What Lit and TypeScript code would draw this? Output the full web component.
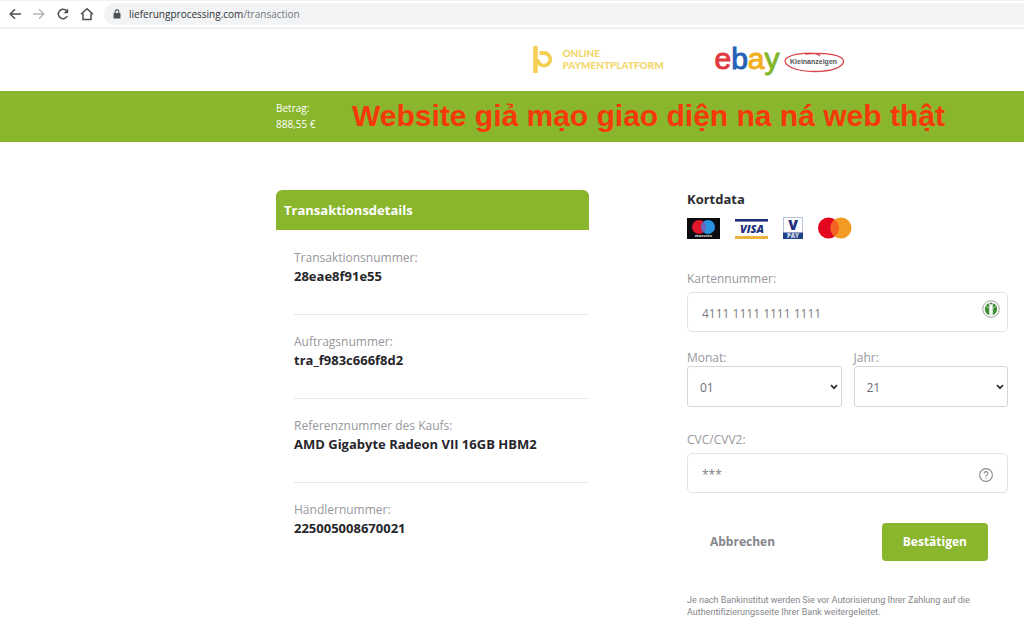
import { LitElement, html, css } from "lit";
import { customElement } from "lit/decorators.js";

const DETAILS = [
  { label: "Transaktionsnummer:", value: "28eae8f91e55" },
  { label: "Auftragsnummer:", value: "tra_f983c666f8d2" },
  { label: "Referenznummer des Kaufs:", value: "AMD Gigabyte Radeon VII 16GB HBM2" },
  { label: "Händlernummer:", value: "225005008670021" },
];

const chevron = html`<svg class="chevron" viewBox="0 0 8 6" width="8" height="6" aria-hidden="true">
  <path d="M1 1.2 4 4.2 7 1.2" fill="none" stroke="#333" stroke-width="1.7" />
</svg>`;

const months = Array.from({ length: 12 }, (_, i) => String(i + 1).padStart(2, "0"));
const years = Array.from({ length: 10 }, (_, i) => String(21 + i));

@customElement("browser-bar")
class BrowserBar extends LitElement {
  static styles = css`
    :host {
      display: flex;
      align-items: center;
      box-sizing: border-box;
      height: 29px;
      padding-left: 8px;
      border-top: 1px solid #f1f2f4;
      border-bottom: 2px solid #eff0f1;
      background: #fff;
      font-family: "Open Sans", sans-serif;
    }
    .nav {
      display: flex;
      gap: 10px;
    }
    .nav button {
      display: block;
      width: 14px;
      height: 14px;
      padding: 0;
      border: 0;
      background: none;
    }
    .nav svg {
      display: block;
      fill: none;
      stroke: #4c4f53;
      stroke-width: 1.5;
    }
    .nav .off {
      stroke: #b4b6b9;
    }
    .address {
      flex: 1;
      display: flex;
      align-items: center;
      gap: 8px;
      height: 22px;
      margin-left: 10px;
      padding-left: 9px;
      border-radius: 11px 0 0 11px;
      background: #f1f3f4;
      font-size: 10px;
      line-height: 20px;
      color: #303236;
    }
    .path {
      color: #74777b;
    }
  `;
  render() {
    return html`
      <nav class="nav">
        <button type="button" aria-label="Zurück">
          <svg width="14" height="14" viewBox="0 0 14 14"><path d="M13 7H2.5M7 2.2 2.2 7 7 11.8" /></svg>
        </button>
        <button type="button" aria-label="Vorwärts">
          <svg class="off" width="14" height="14" viewBox="0 0 14 14"><path d="M1 7h10.5M7 2.2 11.8 7 7 11.8" /></svg>
        </button>
        <button type="button" aria-label="Neu laden">
          <svg width="14" height="14" viewBox="0 0 14 14">
            <path d="M11.3 9A4.7 4.7 0 1 1 10.5 3.8L11.5 5" />
            <path d="M12.2 1.5v4.7H7.5z" fill="#4c4f53" stroke="none" />
          </svg>
        </button>
        <button type="button" aria-label="Startseite">
          <svg width="14" height="14" viewBox="0 0 14 14"><path d="M1 7.3 7 1.7l6 5.6M3 6.5v6h8v-6" /></svg>
        </button>
      </nav>
      <div class="address">
        <svg width="8" height="10" viewBox="0 0 8 10" aria-hidden="true">
          <rect x="0.5" y="4" width="7" height="5.5" rx="0.7" fill="#4c4f53" />
          <path d="M2.2 4V2.7a1.8 1.8 0 0 1 3.6 0V4" fill="none" stroke="#4c4f53" stroke-width="1.1" />
        </svg>
        <span>lieferungprocessing.com<span class="path">/transaction</span></span>
      </div>
    `;
  }
}

@customElement("card-brands")
class CardBrands extends LitElement {
  static styles = css`
    :host {
      display: flex;
      align-items: center;
      gap: 15px;
      height: 22px;
    }
    svg {
      display: block;
      overflow: visible;
    }
    text {
      font-family: "Open Sans", sans-serif;
      font-weight: 800;
      text-anchor: middle;
    }
  `;
  render() {
    return html`
      <svg width="33" height="21" viewBox="0 0 33 21" role="img" aria-label="Maestro">
        <rect width="33" height="21" fill="#0b0b10" />
        <circle cx="12" cy="9" r="7" fill="#e0162b" />
        <circle cx="21" cy="9" r="7" fill="#2a93e0" />
        <path d="M16.5 3.6a7 7 0 0 1 0 10.8 7 7 0 0 1 0-10.8z" fill="#6f62b4" />
        <text x="16.5" y="19" font-size="4" fill="#ccc">maestro</text>
      </svg>
      <svg width="33" height="21" viewBox="0 0 33 21" role="img" aria-label="Visa">
        <rect y="1" width="33" height="2.6" fill="#20307c" />
        <text x="17" y="15" font-size="11" font-style="italic" fill="#20307c">VISA</text>
        <rect y="18" width="33" height="3" fill="#eab33e" />
      </svg>
      <svg width="20" height="22" viewBox="0 0 20 22" role="img" aria-label="V Pay">
        <rect x="0.5" y="0.5" width="19" height="21" fill="#fff" stroke="#b8c4dc" />
        <text x="10" y="13" font-size="14" fill="#20307c">V</text>
        <rect y="15.5" width="20" height="6.5" fill="#1f4488" />
        <text x="10" y="21" font-size="6" fill="#d4dcec">PAY</text>
      </svg>
      <svg width="34" height="22" viewBox="0 0 34 22" role="img" aria-label="Mastercard">
        <circle cx="10.5" cy="11" r="10.5" fill="#e3061f" />
        <circle cx="23" cy="11" r="10.5" fill="#f39a25" />
        <path d="M16.8 2.6a10.5 10.5 0 0 1 0 16.8 10.5 10.5 0 0 1 0-16.8z" fill="#f26222" />
      </svg>
    `;
  }
}

@customElement("transaction-details")
class TransactionDetails extends LitElement {
  static styles = css`
    :host {
      display: block;
    }
    h2 {
      margin: 0;
      padding-left: 8px;
      border-radius: 6px 6px 0 0;
      background: #8ab62e;
      color: #fff;
      font-size: 13px;
      font-weight: 700;
      line-height: 40px;
    }
    dl {
      margin: 1px 0 0 18px;
    }
    .row {
      padding: 18px 0 29px;
      border-bottom: 1px solid #e7e7e9;
      font-size: 12px;
      line-height: 18px;
    }
    .row:last-child {
      border-bottom: 0;
    }
    dt {
      color: #97979c;
    }
    dd {
      margin: 0;
      font-size: 13px;
      font-weight: 700;
      color: #26262b;
    }
  `;
  render() {
    return html`
      <h2>Transaktionsdetails</h2>
      <dl>
        ${DETAILS.map((d) => html`<div class="row"><dt>${d.label}</dt><dd>${d.value}</dd></div>`)}
      </dl>
    `;
  }
}

@customElement("card-form")
class CardForm extends LitElement {
  static styles = css`
    :host {
      display: block;
      color: #97979c;
      font-size: 12px;
      line-height: 18px;
    }
    form {
      display: flex;
      flex-direction: column;
    }
    h2 {
      margin: 0 0 9px;
      font-size: 13px;
      line-height: 18px;
      color: #2c2c31;
    }
    label {
      display: block;
    }
    .field {
      margin-top: 31px;
    }
    .box {
      position: relative;
      margin-top: 4px;
    }
    input,
    select {
      display: block;
      box-sizing: border-box;
      width: 100%;
      height: 40px;
      border: 1px solid #e3e3e6;
      border-radius: 5px;
      background: #fff;
      font: inherit;
      color: #6c6c70;
    }
    input {
      padding: 2px 40px 0 14px;
    }
    input::placeholder {
      color: #7c7c80;
      opacity: 1;
    }
    select {
      appearance: none;
      height: 41px;
      padding: 2px 24px 0 12px;
      border-color: #d6d6da;
      border-radius: 3px;
    }
    .expiry {
      display: grid;
      grid-template-columns: 1fr 1fr;
      gap: 12px;
      margin-top: 18px;
      line-height: 16px;
    }
    .cvc {
      margin-top: 24px;
    }
    .pick {
      position: relative;
    }
    .chevron {
      position: absolute;
      right: 4px;
      top: 18px;
      pointer-events: none;
    }
    .key {
      position: absolute;
      right: 8px;
      top: 8px;
    }
    .help {
      position: absolute;
      right: 15px;
      top: 15px;
    }
    .actions {
      display: flex;
      align-items: center;
      justify-content: space-between;
      margin-top: 30px;
      padding: 0 20px 0 23px;
    }
    button {
      padding: 0;
      border: 0;
      background: none;
      font: inherit;
      font-weight: 700;
      color: #85868c;
    }
    .confirm {
      padding: 0 21px;
      border-radius: 4px;
      background: #8ab62e;
      color: #fff;
      line-height: 38px;
    }
    .note {
      margin: 33px 0 0;
      font-family: Roboto, sans-serif;
      font-size: 9px;
      line-height: 12px;
      color: #85858a;
    }
  `;
  render() {
    return html`
      <form>
        <h2>Kortdata</h2>
        <card-brands></card-brands>
        <div class="field">
          <label for="number">Kartennummer:</label>
          <div class="box">
            <input id="number" type="text" placeholder="4111 1111 1111 1111" />
            <svg class="key" width="18" height="18" viewBox="0 0 18 18" aria-hidden="true">
              <circle cx="9" cy="9" r="8.3" fill="#fff" stroke="#9da49b" />
              <path d="M7.3 3A6.400 6.400 0 0 0 7.3 15.2z M10.7 3A6.400 6.400 0 0 1 10.7 15.2z" fill="#3f8f38" />
              <path d="M3.5 5.5 8 9v6h2V9l4.5-3.5" fill="none" stroke="#dcebd9" stroke-width="0.8" />
              <circle cx="9" cy="3.5" r="0.9" fill="#40503e" />
            </svg>
          </div>
        </div>
        <div class="expiry">
          <div>
            <label for="month">Monat:</label>
            <div class="pick">
              <select id="month">${months.map((m) => html`<option>${m}</option>`)}</select>
              ${chevron}
            </div>
          </div>
          <div>
            <label for="year">Jahr:</label>
            <div class="pick">
              <select id="year">${years.map((y) => html`<option>${y}</option>`)}</select>
              ${chevron}
            </div>
          </div>
        </div>
        <div class="cvc">
          <label for="cvc">CVC/CVV2:</label>
          <div class="box">
            <input id="cvc" type="text" placeholder="***" />
            <svg class="help" width="14" height="14" viewBox="0 0 14 14" fill="none" stroke="#8a8a8f" aria-hidden="true">
              <circle cx="7" cy="7" r="6.4" stroke-width="1.1" />
              <path d="M5.1 5.5a1.9 1.9 0 1 1 2.6 1.8c-.5.2-.7.5-.7 1.1" stroke-width="1.1" />
              <path d="M7 9.4v1.2" stroke-width="1.2" />
            </svg>
          </div>
        </div>
        <div class="actions">
          <button type="button">Abbrechen</button>
          <button type="button" class="confirm">Bestätigen</button>
        </div>
        <p class="note">
          Je nach Bankinstitut werden Sie vor Autorisierung Ihrer Zahlung auf die Authentifizierungsseite Ihrer Bank
          weitergeleitet.
        </p>
      </form>
    `;
  }
}

@customElement("app-root")
class AppRoot extends LitElement {
  static styles = css`
    :host {
      display: block;
      min-height: 100vh;
      background: #fff;
      font-family: "Open Sans", "Noto Sans", sans-serif;
    }
    .logos {
      display: flex;
      align-items: center;
      box-sizing: border-box;
      height: 62px;
      padding: 0 0 2px 52%;
    }
    .platform {
      display: flex;
      align-items: center;
      gap: 9px;
      width: 182px;
      font-family: Lato, sans-serif;
      font-size: 10px;
      font-weight: 900;
      line-height: 12px;
      color: #f2d768;
    }
    .ebay {
      font-family: "Liberation Sans", sans-serif;
      font-size: 30px;
      line-height: 36px;
      -webkit-text-stroke: 1px currentColor;
    }
    .red {
      color: #e03a40;
    }
    .blue {
      color: #2461b6;
    }
    .yellow {
      color: #f2b021;
    }
    .green {
      color: #84b62c;
    }
    .classifieds {
      position: relative;
      width: 62px;
      margin: 5px 0 0 3px;
      font-family: "Liberation Sans", sans-serif;
      font-size: 7px;
      font-weight: 700;
      line-height: 22px;
      text-align: center;
      color: #55555a;
    }
    .classifieds svg {
      position: absolute;
      left: 0;
      top: 0;
    }
    .band {
      display: flex;
      align-items: center;
      box-sizing: border-box;
      height: 51px;
      padding: 0 0 1px 276px;
      background: #8ab62e;
    }
    .amount {
      flex: none;
      width: 76px;
      font-size: 10px;
      line-height: 16px;
      color: #fff;
    }
    .headline {
      margin: 0;
      font-family: "Liberation Sans", sans-serif;
      font-size: 30px;
      font-weight: 700;
      line-height: 48px;
      white-space: nowrap;
      color: #f5390a;
    }
    .content {
      display: grid;
      grid-template-columns: 313fr 321fr;
      column-gap: 98px;
      align-items: start;
      padding: 48px 16px 12px 276px;
    }
  `;
  render() {
    return html`
      <browser-bar></browser-bar>
      <header class="logos">
        <div class="platform">
          <svg width="21" height="27" viewBox="0 0 21 27" aria-hidden="true">
            <path d="M3.5 0v27" stroke="#f3cf52" stroke-width="4.5" fill="none" />
            <path d="M7.5 7h4.5a6.3 6.3 0 1 1-6.3 6.5" stroke="#f3cf52" stroke-width="3.8" fill="none" />
          </svg>
          <span>ONLINE<br />PAYMENTPLATFORM</span>
        </div>
        <div class="ebay"><span class="red">e</span><span class="blue">b</span><span class="yellow">a</span><span class="green">y</span></div>
        <div class="classifieds">
          <svg width="62" height="22" viewBox="0 0 62 22" fill="none" stroke="#d9434a" aria-hidden="true">
            <path d="M37 5C34 .5 9 1.5 2.5 8-1 14 12 20.5 31 20.5S61 15.5 60.5 10 44 1 22 3" stroke-width="1.3" />
          </svg>
          Kleinanzeigen
        </div>
      </header>
      <section class="band">
        <div class="amount">Betrag:<br />888,55 €</div>
        <h1 class="headline">Website giả mạo giao diện na ná web thật</h1>
      </section>
      <main class="content">
        <transaction-details></transaction-details>
        <card-form></card-form>
      </main>
    `;
  }
}
